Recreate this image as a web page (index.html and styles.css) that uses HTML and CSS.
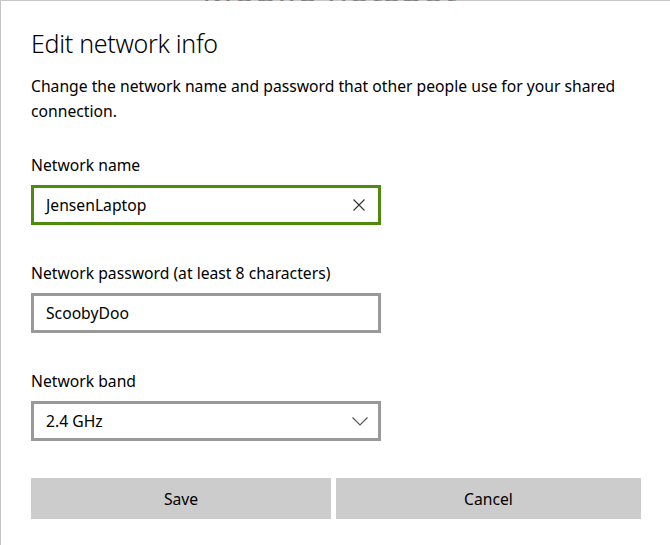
FILE: index.html
```html
<!DOCTYPE html>
<html lang="en">
<head>
<meta charset="utf-8">
<title>Edit network info</title>
<link rel="stylesheet" href="styles.css">
</head>
<body>
<div class="backdrop"><span class="backdrop-text">Mobile hotspot</span></div>
<div class="dialog">
  <h1 class="title">Edit network info</h1>
  <p class="desc">Change the network name and password that other people use for your shared connection.</p>

  <div class="field">
    <div class="label">Network name</div>
    <div class="box box-focus">
      <span class="value">JensenLaptop</span>
      <svg class="icon" width="12" height="12" viewBox="0 0 12 12"><path d="M0.5 0.5 L11.5 11.5 M11.5 0.5 L0.5 11.5" stroke="#333" stroke-width="1.1" fill="none"/></svg>
    </div>
  </div>

  <div class="field">
    <div class="label">Network password (at least 8 characters)</div>
    <div class="box">
      <span class="value">ScoobyDoo</span>
    </div>
  </div>

  <div class="field">
    <div class="label">Network band</div>
    <div class="box">
      <span class="value">2.4 GHz</span>
      <svg class="icon chevron" width="16" height="9" viewBox="0 0 16 9"><path d="M0.5 0.5 L8 8 L15.5 0.5" stroke="#555" stroke-width="1.1" fill="none"/></svg>
    </div>
  </div>

  <div class="buttons">
    <div class="btn">Save</div>
    <div class="btn">Cancel</div>
  </div>
</div>
</body>
</html>
```

FILE: styles.css
```css
html, body {
  margin: 0;
  padding: 0;
  background: #fff;
}
body {
  font-family: "Segoe UI", "Noto Sans", "Open Sans", sans-serif;
  color: #000;
  width: 670px;
  height: 545px;
  overflow: hidden;
}
.backdrop {
  height: 1px;
  overflow: hidden;
  display: flex;
  align-items: flex-end;
  justify-content: center;
  background: #c8c8c8;
  padding-right: 10px;
}
.backdrop-text {
  font-size: 34px;
  line-height: 34px;
  color: #808080;
  flex: none;
  letter-spacing: 1px;
  margin-bottom: -6px;
}
.dialog {
  border-left: 1px solid #c4c4c4;
  height: 544px;
  box-sizing: border-box;
  padding: 26px 29px 0 30px;
}
.title {
  margin: 0;
  font-size: 25px;
  font-weight: 300;
  line-height: 32px;
  letter-spacing: -0.3px;
}
.desc {
  margin: 15px 0 0;
  font-size: 15.7px;
  line-height: 25px;
}
.field {
  margin-top: 31px;
}
.field + .field {
  margin-top: 38px;
}
.label {
  font-size: 15.7px;
  line-height: 20px;
  margin-bottom: 10px;
}
.box {
  width: 350px;
  height: 40px;
  box-sizing: border-box;
  border: 3px solid #999;
  display: flex;
  align-items: center;
  justify-content: space-between;
  padding: 0 13px 0 12px;
}
.box-focus {
  border-color: #4e8a0c;
}
.value {
  font-size: 15.7px;
}
.chevron {
  margin-right: -3px;
}
.buttons {
  display: flex;
  gap: 5px;
  margin-top: 37px;
}
.btn {
  background: #cccccc;
  height: 41px;
  display: flex;
  align-items: center;
  justify-content: center;
  font-size: 15.7px;
  width: 300px;
}
.btn + .btn {
  width: 305px;
}
```
